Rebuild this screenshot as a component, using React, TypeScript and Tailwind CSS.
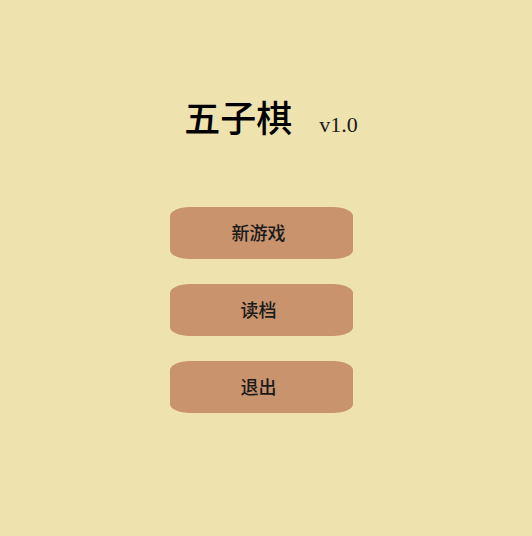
import React from "react";

const menuItems = ["新游戏", "读档", "退出"];

const App = () => {
    return (
        <div
            className="min-h-screen w-full bg-[#eee2af] flex flex-col items-center"
            style={{ fontFamily: '"Liberation Serif", "Noto Sans CJK SC", serif' }}
        >
            {/* Title */}
            <div className="mt-[96px] ml-[10px] flex items-baseline">
                <h1 className="text-[36px] leading-[48px] font-medium text-black">五子棋</h1>
                <span className="ml-[27px] text-[22px] text-[#1a1a1a]">v1.0</span>
            </div>

            {/* Menu */}
            <div className="mt-[63px] ml-[-9px] flex flex-col gap-[25px]">
                {menuItems.map((item) => (
                    <button
                        key={item}
                        className="w-[183px] h-[52px] pr-[6px] pt-[3px] rounded-[20px/9px] bg-[#c8936d] text-[18px] font-medium text-[#1a1a1a] flex items-center justify-center"
                    >
                        {item}
                    </button>
                ))}
            </div>
        </div>
    );
};

export default App;
